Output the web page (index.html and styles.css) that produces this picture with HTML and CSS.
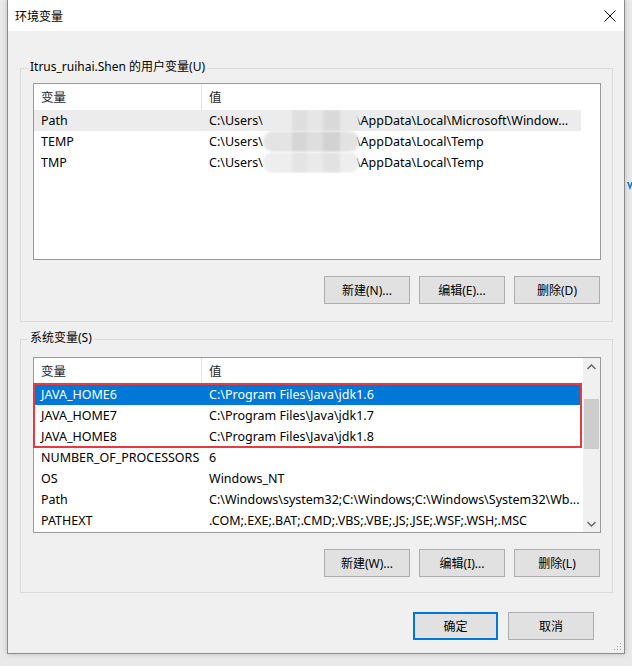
FILE: index.html
```html
<!DOCTYPE html>
<html lang="zh-CN">
<head>
    <meta charset="UTF-8">
    <meta name="viewport" content="width=device-width, initial-scale=1.0">
    <title>环境变量</title>
    <link rel="stylesheet" href="styles.css">
</head>
<body>
    <svg class="behind-mark" width="6" height="8" viewBox="0 0 6 8"><path d="M0 0 L3 8 L6 0 L4.2 0 L3 4 L1.8 0 Z" fill="#1a78c8"/></svg>

    <div class="dialog">
        <div class="titlebar">
            <span class="title">环境变量</span>
            <span class="close">
                <svg width="12" height="12" viewBox="0 0 12 12"><path d="M0.5 0.5 L11.5 11.5 M11.5 0.5 L0.5 11.5" stroke="#111" stroke-width="1" fill="none"/></svg>
            </span>
        </div>

        <div class="group">
            <span class="group-label">Itrus_ruihai.Shen 的用户变量(U)</span>
            <div class="list user-list">
                <div class="table">
                    <div class="head">
                        <div class="c1">变量</div>
                        <div class="c2">值</div>
                    </div>
                    <div class="row inactive">
                        <div class="c1">Path</div>
                        <div class="c2">C:\Users\<span class="blur"></span>\AppData\Local\Microsoft\Window...</div>
                    </div>
                    <div class="row">
                        <div class="c1">TEMP</div>
                        <div class="c2">C:\Users\<span class="blur mid"></span>\AppData\Local\Temp</div>
                    </div>
                    <div class="row">
                        <div class="c1">TMP</div>
                        <div class="c2">C:\Users\<span class="blur last"></span>\AppData\Local\Temp</div>
                    </div>
                </div>
            </div>
            <div class="btns">
                <button>新建(N)...</button>
                <button>编辑(E)...</button>
                <button>删除(D)</button>
            </div>
        </div>

        <div class="group second">
            <span class="group-label">系统变量(S)</span>
            <div class="list sys-list">
                <div class="table">
                    <div class="head">
                        <div class="c1">变量</div>
                        <div class="c2">值</div>
                    </div>
                    <div class="marked">
                        <div class="row selected">
                            <div class="c1">JAVA_HOME6</div>
                            <div class="c2">C:\Program Files\Java\jdk1.6</div>
                        </div>
                        <div class="row">
                            <div class="c1">JAVA_HOME7</div>
                            <div class="c2">C:\Program Files\Java\jdk1.7</div>
                        </div>
                        <div class="row">
                            <div class="c1">JAVA_HOME8</div>
                            <div class="c2">C:\Program Files\Java\jdk1.8</div>
                        </div>
                    </div>
                    <div class="row">
                        <div class="c1">NUMBER_OF_PROCESSORS</div>
                        <div class="c2">6</div>
                    </div>
                    <div class="row">
                        <div class="c1">OS</div>
                        <div class="c2">Windows_NT</div>
                    </div>
                    <div class="row">
                        <div class="c1">Path</div>
                        <div class="c2">C:\Windows\system32;C:\Windows;C:\Windows\System32\Wb...</div>
                    </div>
                    <div class="row">
                        <div class="c1">PATHEXT</div>
                        <div class="c2">.COM;.EXE;.BAT;.CMD;.VBS;.VBE;.JS;.JSE;.WSF;.WSH;.MSC</div>
                    </div>
                </div>
                <div class="scroll">
                    <span class="arrow">
                        <svg width="9" height="6" viewBox="0 0 9 6"><path d="M0.5 5 L4.5 1 L8.5 5" stroke="#606060" stroke-width="1.3" fill="none"/></svg>
                    </span>
                    <span class="thumb"></span>
                    <span class="arrow down">
                        <svg width="9" height="6" viewBox="0 0 9 6"><path d="M0.5 1 L4.5 5 L8.5 1" stroke="#606060" stroke-width="1.3" fill="none"/></svg>
                    </span>
                </div>
            </div>
            <div class="btns">
                <button>新建(W)...</button>
                <button>编辑(I)...</button>
                <button>删除(L)</button>
            </div>
        </div>

        <div class="footer">
            <button class="default">确定</button>
            <button>取消</button>
        </div>

        <svg class="grip" width="8" height="8" viewBox="0 0 8 8">
            <rect x="6" y="0" width="1" height="1" fill="#a0a0a0"/>
            <rect x="3" y="3" width="1" height="1" fill="#a0a0a0"/>
            <rect x="6" y="3" width="1" height="1" fill="#a0a0a0"/>
            <rect x="0" y="6" width="1" height="1" fill="#a0a0a0"/>
            <rect x="3" y="6" width="1" height="1" fill="#a0a0a0"/>
            <rect x="6" y="6" width="1" height="1" fill="#a0a0a0"/>
        </svg>
    </div>
</body>
</html>
```

FILE: styles.css
```css
body {
    margin: 0;
    height: 666px;
    overflow: hidden;
    background-color: #e9e9e9;
    font-family: "Noto Sans", "Noto Sans CJK SC", sans-serif;
    font-size: 12px;
    color: #000;
    position: relative;
}

.behind-mark {
    position: absolute;
    left: 627px;
    top: 182px;
}

.dialog {
    position: relative;
    margin-left: 7px;
    width: 616px;
    background-color: #f0f0f0;
    border: 1px solid #8c8c8c;
    border-top: none;
    box-shadow: 0 0 5px rgba(0, 0, 0, 0.2);
}

.titlebar {
    height: 31px;
    background-color: #fff;
    display: flex;
    align-items: center;
    justify-content: space-between;
    padding-left: 7px;
}

.close {
    width: 28px;
    display: flex;
    justify-content: center;
}

.group {
    margin: 37px 11px 0 12px;
    border: 1px solid #dcdcdc;
    padding: 0 11px 17px 12px;
}

.group.second {
    margin-top: 17px;
    padding-bottom: 15px;
}

.group-label {
    display: block;
    width: max-content;
    margin: -10px 0 0 -5px;
    padding: 0 2px;
    line-height: 16px;
    background-color: #f0f0f0;
}

.list {
    margin-top: 8px;
    height: 177px;
    box-sizing: border-box;
    border: 1px solid #9a9a9a;
    background-color: #fff;
    display: flex;
}

.sys-list {
    margin-top: 11px;
    height: 176px;
}

.table {
    flex: 1;
    font-size: 12.5px;
}

.head {
    display: flex;
    height: 26px;
    line-height: 27px;
    color: #1e1e1e;
}

.head .c1 {
    border-right: 1px solid #e5e5e5;
}

.row {
    display: flex;
    width: 547px;
    height: 21px;
    line-height: 21px;
}

.c1 {
    width: 168px;
    box-sizing: border-box;
    padding-left: 7px;
    white-space: nowrap;
}

.c2 {
    width: 379px;
    box-sizing: border-box;
    padding-left: 7px;
    white-space: nowrap;
    overflow: hidden;
}

.row.inactive {
    background-color: #ececec;
}

.row.selected {
    background-color: #0078d7;
    color: #fff;
}

.blur {
    display: inline-block;
    vertical-align: top;
    width: 96px;
    height: 21px;
    margin-right: -3px;
    background: linear-gradient(90deg, #ececec 0 30%, #dedede 30% 46%, #e6e6e6 46% 62%, #d9d9d9 62% 80%, #e8e8e8 80%);
    filter: blur(1.5px);
}

.blur.mid {
    border-radius: 10px;
    background: linear-gradient(90deg, #e4e4e4 0 30%, #d6d6d6 30% 46%, #dedede 46% 62%, #d2d2d2 62% 80%, #e2e2e2 80%);
}

.blur.last {
    border-radius: 10px;
    background: linear-gradient(90deg, #eeeeee 0 30%, #e4e4e4 30% 46%, #eaeaea 46% 62%, #e2e2e2 62% 80%, #eeeeee 80%);
}

.marked {
    position: relative;
}

.marked::after {
    content: "";
    position: absolute;
    left: -1px;
    top: -1px;
    width: 549px;
    height: 65px;
    box-sizing: border-box;
    border: 2px solid #e8393f;
}

.scroll {
    width: 17px;
    background-color: #f0f0f0;
    display: flex;
    flex-direction: column;
    align-items: center;
}

.arrow {
    height: 17px;
    display: flex;
    align-items: center;
    justify-content: center;
}

.arrow.down {
    margin-top: auto;
}

.thumb {
    width: 15px;
    height: 50px;
    margin-top: 24px;
    background-color: #cdcdcd;
}

.btns {
    display: flex;
    justify-content: flex-end;
    gap: 9px;
    margin-top: 16px;
    padding-right: 1px;
}

button {
    width: 86px;
    height: 28px;
    box-sizing: border-box;
    padding: 0;
    background-color: #e1e1e1;
    border: 1px solid #adadad;
    font-family: inherit;
    font-size: 12px;
    color: #000;
}

.footer {
    display: flex;
    justify-content: flex-end;
    gap: 10px;
    margin-top: 19px;
    padding: 0 30px 13px 0;
}

button.default {
    width: 85px;
    border: 2px solid #0078d7;
}

.grip {
    position: absolute;
    right: 2px;
    bottom: 2px;
}
```
